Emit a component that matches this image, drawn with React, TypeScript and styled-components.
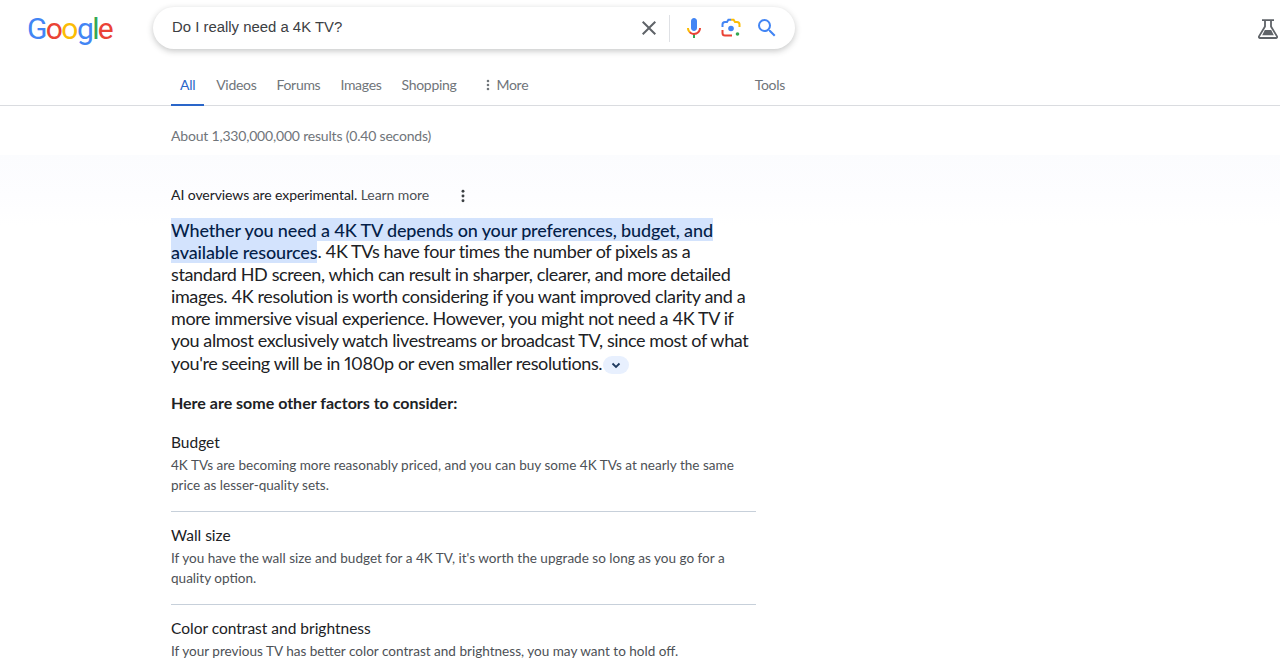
import styled, { createGlobalStyle } from "styled-components";

const GlobalStyle = createGlobalStyle`
  html, body {
    margin: 0;
    padding: 0;
    background: #fff;
    overflow: hidden;
    font-family: "Lato", "Liberation Sans", sans-serif;
  }
`;

const tabs = ["All", "Videos", "Forums", "Images", "Shopping"];

const factors = [
  {
    title: "Budget",
    lines: [
      "4K TVs are becoming more reasonably priced, and you can buy some 4K TVs at nearly the same",
      "price as lesser-quality sets.",
    ],
  },
  {
    title: "Wall size",
    lines: [
      "If you have the wall size and budget for a 4K TV, it's worth the upgrade so long as you go for a",
      "quality option.",
    ],
  },
  {
    title: "Color contrast and brightness",
    lines: ["If your previous TV has better color contrast and brightness, you may want to hold off."],
  },
];

function MicIcon() {
  return (
    <svg width="24" height="24" viewBox="0 0 24 24">
      <path fill="#4285f4" d="m12 15c1.66 0 3-1.31 3-2.97v-7.02c0-1.66-1.34-3.01-3-3.01s-3 1.34-3 3.01v7.02c0 1.66 1.34 2.97 3 2.97z" />
      <path fill="#34a853" d="m11 18.08h2v3.92h-2z" />
      <path fill="#fbbc05" d="m7.05 16.87c-1.27-1.33-2.05-2.83-2.05-4.87h2c0 1.45 0.56 2.42 1.47 3.38v0.32l-1.15 1.18z" />
      <path fill="#ea4335" d="m12 16.93a4.97 5.25 0 0 1 -3.54 -1.55l-1.41 1.49c1.26 1.34 3.02 2.13 4.95 2.13 3.87 0 6.99-2.92 6.99-7h-1.99c0 2.92-2.24 4.93-5 4.93z" />
    </svg>
  );
}

function LensIcon() {
  return (
    <svg width="24" height="24" viewBox="0 0 24 24" fill="none" strokeWidth="2">
      <path stroke="#4285f4" d="M3.500 11V8.500A2.500 2.500 0 0 1 6 6h2l1.400-2.200H12" />
      <path stroke="#fbbc05" d="M12 3.800h2.600L16 6h2a2.500 2.500 0 0 1 2.500 2.500V11" />
      <path stroke="#ea4335" d="M3.500 14v3A2.500 2.500 0 0 0 6 19.500h7" />
      <circle cx="12" cy="12.500" r="2.800" fill="#4285f4" />
      <circle cx="18.500" cy="18" r="1.800" fill="#34a853" />
    </svg>
  );
}

function SearchIcon() {
  return (
    <svg width="24" height="24" viewBox="0 0 24 24" fill="#4285f4">
      <path d="M15.500 14h-.79l-.28-.27A6.471 6.471 0 0 0 16 9.500 6.500 6.500 0 1 0 9.500 16c1.610 0 3.090-.59 4.230-1.570l.27.28v.79l5 4.990L20.490 19l-4.990-5zm-6 0C7.010 14 5 11.990 5 9.500S7.010 5 9.500 5 14 7.010 14 9.500 11.990 14 9.500 14z" />
    </svg>
  );
}

function CloseIcon() {
  return (
    <svg width="24" height="24" viewBox="0 0 24 24" fill="#5f6368">
      <path d="M19 6.410 17.590 5 12 10.590 6.410 5 5 6.410 10.590 12 5 17.590 6.410 19 12 13.410 17.590 19 19 17.590 13.410 12z" />
    </svg>
  );
}

function FlaskIcon() {
  return (
    <svg width="24" height="24" viewBox="0 0 24 24">
      <path fill="#5f6368" d="M8.800 13h6.400l2.600 5.200H6.200z" />
      <path fill="none" stroke="#5f6368" strokeWidth="1.800" strokeLinejoin="round" d="M6 3.200h12M9 3.200v6.300L3 19.400A1.100 1.100 0 0 0 4 21h16a1.100 1.100 0 0 0 1-1.600L15 9.500V3.200" />
    </svg>
  );
}

function DotsIcon({ size }: { size: number }) {
  return (
    <svg width={size} height={size} viewBox="0 0 24 24" fill="currentColor">
      <circle cx="12" cy="5" r="2.200" />
      <circle cx="12" cy="12" r="2.200" />
      <circle cx="12" cy="19" r="2.200" />
    </svg>
  );
}

export default function App() {
  return (
    <Page>
      <GlobalStyle />
      <Header>
        <Logo>
          <LogoLetter $color="#4285f4">G</LogoLetter>
          <LogoLetter $color="#ea4335">o</LogoLetter>
          <LogoLetter $color="#fbbc05">o</LogoLetter>
          <LogoLetter $color="#4285f4">g</LogoLetter>
          <LogoLetter $color="#34a853">l</LogoLetter>
          <LogoLetter $color="#ea4335">e</LogoLetter>
        </Logo>
        <SearchBox>
          <Query>Do I really need a 4K TV?</Query>
          <ClearButton>
            <CloseIcon />
          </ClearButton>
          <Divider />
          <SearchActions>
            <MicIcon />
            <LensIcon />
            <SearchIcon />
          </SearchActions>
        </SearchBox>
        <Labs>
          <FlaskIcon />
        </Labs>
      </Header>
      <TabBar>
        <TabList>
          {tabs.map((tab, i) => (
            <Tab key={tab} $active={i === 0}>
              {tab}
            </Tab>
          ))}
          <MoreTab>
            <DotsIcon size={14} />
            More
          </MoreTab>
        </TabList>
        <Tools>Tools</Tools>
      </TabBar>
      <ResultStats>About 1,330,000,000 results (0.40 seconds)</ResultStats>
      <Overview>
        <OverviewHead>
          <Notice>
            AI overviews are experimental. <LearnMore>Learn more</LearnMore>
          </Notice>
          <OverviewMenu>
            <DotsIcon size={16} />
          </OverviewMenu>
        </OverviewHead>
        <Summary>
          <Highlight>
            Whether you need a 4K TV depends on your preferences, budget, and
            <br />
            available resources
          </Highlight>
          . 4K TVs have four times the number of pixels as a
          <br />
          standard HD screen, which can result in sharper, clearer, and more detailed
          <br />
          images. 4K resolution is worth considering if you want improved clarity and a
          <br />
          more immersive visual experience. However, you might not need a 4K TV if
          <br />
          you almost exclusively watch livestreams or broadcast TV, since most of what
          <br />
          you're seeing will be in 1080p or even smaller resolutions.
          <Expand>
            <svg width="12" height="12" viewBox="0 0 12 12" fill="none" stroke="#1f3a5f" strokeWidth="1.800">
              <path d="M2.500 4.500 6 8l3.500-3.500" />
            </svg>
          </Expand>
        </Summary>
        <SubHeading>Here are some other factors to consider:</SubHeading>
        {factors.map((factor) => (
          <Factor key={factor.title}>
            <FactorTitle>{factor.title}</FactorTitle>
            {factor.lines.map((line) => (
              <FactorLine key={line}>{line}</FactorLine>
            ))}
          </Factor>
        ))}
      </Overview>
    </Page>
  );
}

const Page = styled.div`
  width: 1280px;
  height: 660px;
  overflow: hidden;
  background: #fff;
`;
const Header = styled.header`
  display: flex;
  align-items: flex-start;
  height: 68px;
  padding-top: 7px;
  box-sizing: border-box;
`;
const Logo = styled.div`
  width: 153px;
  height: 42px;
  padding-left: 27px;
  box-sizing: border-box;
  font-family: "Roboto", sans-serif;
  font-size: 30px;
  line-height: 44px;
  letter-spacing: -1.6px;
`;
const LogoLetter = styled.span<{ $color: string }>`
  color: ${(props) => props.$color};
`;
const SearchBox = styled.div`
  display: flex;
  align-items: center;
  width: 642px;
  height: 42px;
  padding: 0 16px 0 19px;
  box-sizing: border-box;
  border-radius: 21px;
  background: #fff;
  box-shadow: 0 2px 6px rgba(32, 33, 36, 0.26);
`;
const Query = styled.div`
  flex: 1;
  margin-top: -3px;
  font-family: "Liberation Sans", sans-serif;
  font-size: 14.900px;
  color: #3c4043;
`;
const ClearButton = styled.div`
  display: flex;
  margin-right: 10px;
  transform: translateX(3px);
`;
const Divider = styled.div`
  width: 1px;
  height: 27px;
  background: #dfe1e5;
  transform: translateX(1px);
`;
const SearchActions = styled.div`
  display: flex;
  align-items: center;
  gap: 12.500px;
  margin-left: 13px;
`;
const Labs = styled.div`
  display: flex;
  margin-left: auto;
  padding: 10px 0 0;
`;
const TabBar = styled.nav`
  display: flex;
  justify-content: space-between;
  height: 38px;
  padding: 0 495px 0 171px;
  box-sizing: border-box;
  border-bottom: 1px solid #dadce0;
  letter-spacing: -0.3px;
`;
const TabList = styled.div`
  display: flex;
  gap: 20px;
`;
const Tab = styled.div<{ $active?: boolean }>`
  padding: 0 ${(props) => (props.$active ? "9px" : "0")};
  margin-right: ${(props) => (props.$active ? "-8px" : "0")};
  font-size: 14px;
  line-height: 33px;
  color: ${(props) => (props.$active ? "#2a66c9" : "#70757a")};
  border-bottom: ${(props) => (props.$active ? "2px solid #2a66c9" : "none")};
  height: 36px;
`;
const MoreTab = styled.div`
  display: flex;
  align-items: center;
  gap: 2px;
  height: 33px;
  margin-left: 4px;
  font-size: 14px;
  color: #70757a;
`;
const Tools = styled.div`
  font-size: 14px;
  line-height: 33px;
  color: #70757a;
`;
const ResultStats = styled.div`
  height: 49px;
  padding: 21px 0 0 171px;
  box-sizing: border-box;
  font-size: 14px;
  line-height: 18px;
  letter-spacing: -0.19px;
  color: #70757a;
`;
const Overview = styled.main`
  padding: 29px 0 0 171px;
  background: linear-gradient(#fbfcfe 0, #fdfdff 40px, #fff 70px);
`;
const OverviewHead = styled.div`
  display: flex;
  align-items: center;
  height: 20px;
`;
const Notice = styled.div`
  font-size: 14px;
  letter-spacing: -0.08px;
  color: #202124;
`;
const LearnMore = styled.span`
  color: #4d5156;
`;
const OverviewMenu = styled.div`
  display: flex;
  margin: 4px 0 0 26px;
  color: #3c4043;
`;
const Summary = styled.div`
  margin-top: 14px;
  font-size: 18px;
  line-height: 22.3px;
  letter-spacing: -0.38px;
  font-variant-numeric: proportional-nums;
  white-space: nowrap;
  color: #202124;
`;
const Highlight = styled.span`
  padding: 0.500px 0;
  background: #d3e3fd;
  color: #041e49;
  font-weight: 500;
  letter-spacing: -0.14px;
`;
const Expand = styled.span`
  display: inline-flex;
  align-items: center;
  justify-content: center;
  width: 26px;
  height: 18px;
  margin-left: 1px;
  border-radius: 9px;
  background: #e8f0fe;
  vertical-align: middle;
`;
const SubHeading = styled.div`
  margin-top: 18px;
  margin-bottom: 5px;
  font-size: 16px;
  font-weight: 700;
  line-height: 22px;
  color: #202124;
`;
const Factor = styled.div`
  width: 585px;
  padding: 13px 0 16px;
  border-bottom: 1px solid #c7d0da;
  &:last-child {
    border-bottom: none;
  }
`;
const FactorTitle = styled.div`
  margin-bottom: 2px;
  font-size: 15.500px;
  line-height: 21px;
  color: #202124;
`;
const FactorLine = styled.div`
  font-size: 13.550px;
  line-height: 20px;
  white-space: nowrap;
  color: #4d5156;
`;
